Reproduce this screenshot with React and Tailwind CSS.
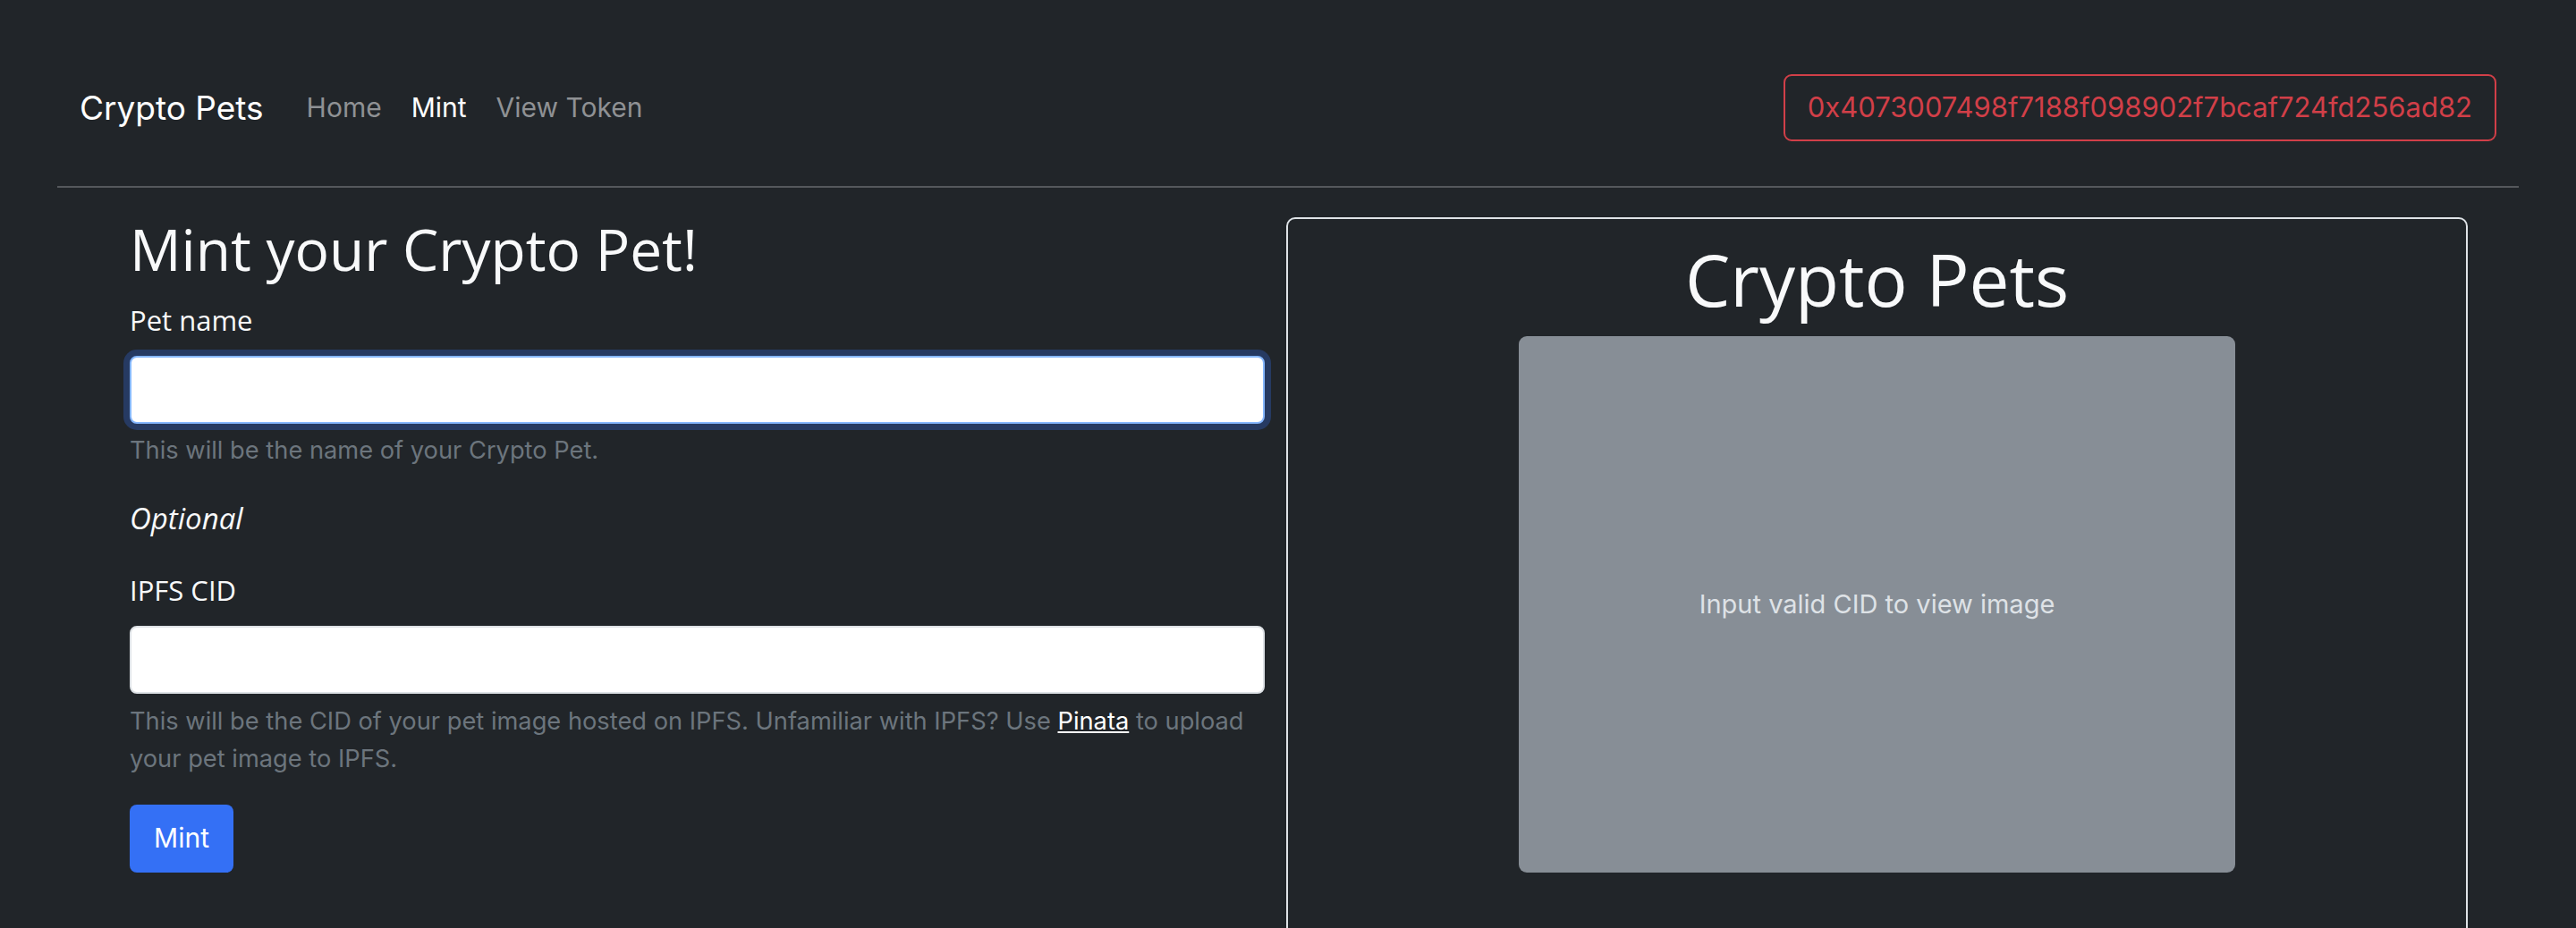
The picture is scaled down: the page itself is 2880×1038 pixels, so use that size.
export default function App() {
  return (
    <div className="w-full h-[1038px] overflow-hidden bg-[#212529] font-['Inter',sans-serif]">
      <nav className="mx-[64px] px-[25px] pt-[83px] pb-[50px] flex items-center justify-between">
        <div className="flex items-center">
          <span className="text-[37px] leading-[1.5] text-white mr-[48px]">Crypto Pets</span>
          <div className="flex items-center gap-[33px] text-[30px] leading-[1.5]">
            <span className="text-[#8f9194]">Home</span>
            <span className="text-white">Mint</span>
            <span className="text-[#8f9194]">View Token</span>
          </div>
        </div>
        <div className="h-[75px] px-[25px] border-2 border-[#d13f48] rounded-[9px] flex items-center text-[#d13f48] text-[31px]">
          0x4073007498f7188f098902f7bcaf724fd256ad82
        </div>
      </nav>
      <div className="mx-[64px] h-[2px] bg-[#55585c]" />
      <div className="flex items-start gap-[24px] pl-[145px] pr-[121px] pt-[31px]">
        <div className="w-[1269px] shrink-0 font-['Open_Sans',sans-serif] text-[#f8f9fa]">
          <h1 className="text-[64px] leading-[1.2] mb-[18px]">Mint your Crypto Pet!</h1>
          <label className="block text-[31px] leading-[45px] mb-[17px]">Pet name</label>
          <input
            type="text"
            className="block w-full h-[76px] bg-white border-2 border-[#86b7fe] rounded-[8px] shadow-[0_0_0_7px_#263a62] outline-none"
          />
          <p className="mt-[9px] text-[27.25px] leading-[42px] text-[#6c757d] font-['Inter',sans-serif]">
            This will be the name of your Crypto Pet.
          </p>
          <p className="mt-[32px] text-[33px] leading-[45px] italic">Optional</p>
          <label className="block mt-[36px] text-[31px] leading-[45px] mb-[17px]">IPFS CID</label>
          <input
            type="text"
            className="block w-full h-[76px] bg-white border-2 border-[#dee2e6] rounded-[8px] outline-none"
          />
          <p className="mt-[10px] text-[27.25px] leading-[42px] text-[#6c757d] font-['Inter',sans-serif]">
            This will be the CID of your pet image hosted on IPFS. Unfamiliar with IPFS? Use{" "}
            <a className="text-white underline">Pinata</a> to upload your pet image to IPFS.
          </p>
          <button className="mt-[30px] h-[76px] w-[116px] rounded-[8px] bg-[#3470f5] text-white text-[30px] font-['Inter',sans-serif] flex items-center justify-center">
            Mint
          </button>
        </div>
        <div className="flex-1 mt-[2px] h-[900px] border-2 border-[#dee2e6] rounded-[10px] pt-[19px] flex flex-col items-center">
          <h2 className="text-[80px] leading-[1.2] font-['Open_Sans',sans-serif] text-[#f8f9fa]">Crypto Pets</h2>
          <div className="mt-[16px] w-[801px] h-[600px] rounded-[9px] bg-[#878e96] flex items-center justify-center text-[29px] text-[#dee2e6]">
            Input valid CID to view image
          </div>
        </div>
      </div>
    </div>
  );
}
